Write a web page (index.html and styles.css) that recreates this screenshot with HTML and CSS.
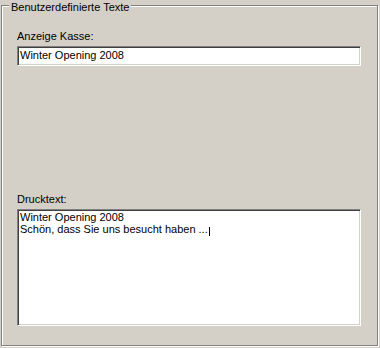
FILE: index.html
```html
<!DOCTYPE html>
<html lang="de">
<head>
  <meta charset="UTF-8">
  <title>Benutzerdefinierte Texte</title>
  <link rel="stylesheet" href="styles.css">
</head>
<body>
  <div class="group">
    <span class="caption">Benutzerdefinierte Texte</span>
    <label class="field-label" for="kasse">Anzeige Kasse:</label>
    <input class="edit" id="kasse" type="text" value="Winter Opening 2008">
    <label class="field-label memo-label">Drucktext:</label>
    <div class="edit memo">
      <div>Winter Opening 2008</div>
      <div>Schön, dass Sie uns besucht haben ...<span class="caret"></span></div>
    </div>
  </div>
</body>
</html>
```

FILE: styles.css
```css
body {
  margin: 0;
  background: #d4d0c8;
  font-family: "Liberation Sans", Arial, sans-serif;
  font-size: 11px;
  line-height: 13px;
  color: #000;
}
.group {
  position: relative;
  box-sizing: border-box;
  width: 377px;
  margin: 5px 2px 2px 1px;
  padding: 24px 16px 19px 15px;
  border: 1px solid #808080;
  box-shadow: 1px 1px 0 #fff, inset 1px 1px 0 #fff;
  display: flex;
  flex-direction: column;
}
.caption {
  position: absolute;
  top: -5px;
  left: 7px;
  padding: 0 2px;
  background: #d4d0c8;
}
.field-label {
  display: block;
  height: 13px;
}
.edit {
  box-sizing: border-box;
  width: 344px;
  margin: 3px 0 0;
  border: 1px solid;
  border-color: #808080 #fff #fff #808080;
  box-shadow: inset 1px 1px 0 #404040, inset -1px -1px 0 #d4d0c8;
  background: #fff;
  font: inherit;
  color: #000;
  outline: none;
}
input.edit {
  height: 20px;
  padding: 1px 2px 4px 2px;
  line-height: 13px;
}
.memo-label {
  margin-top: 127px;
}
.memo {
  height: 117px;
  padding: 1px 2px;
  line-height: 12px;
}
.caret {
  display: inline-block;
  width: 1px;
  height: 9px;
  margin-left: 1px;
  background: #000;
  vertical-align: -3px;
}
```
